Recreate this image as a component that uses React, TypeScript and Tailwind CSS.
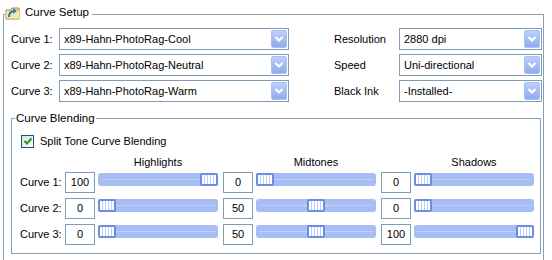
import React from 'react';

const ComboBox: React.FC<{ value: string; width: string }> = ({ value, width }) => (
  <div className={`${width} h-[22px] border border-[#7f9db9] bg-white flex items-center pl-[4px] pr-[1px]`}>
    <span className="flex-1 truncate">{value}</span>
    <div className="w-[16px] h-[18px] rounded-[2px] bg-gradient-to-b from-[#bcd0fa] to-[#8fabee] border border-[#a9c0f3] flex items-center justify-center">
      <svg width="10" height="8" viewBox="0 0 10 8">
        <path d="M1.5 2 L5 5.5 L8.5 2" fill="none" stroke="#ffffff" strokeWidth="2.2" />
      </svg>
    </div>
  </div>
);

const Slider: React.FC<{ value: number }> = ({ value }) => (
  <div className="relative ml-[3px] mt-[1px] w-[120px] h-[13px] rounded-[3px] bg-[#a6bdf5]">
    <div className="absolute left-[3px] right-[3px] top-[6px] h-[1px] bg-[#c0d0f8]" />
    <div
      className="absolute top-0 w-[18px] h-[13px] rounded-[2px] bg-[#6a8ee2] p-[2px]"
      style={{ left: `${(value / 100) * 102}px` }}
    >
      <div className="w-full h-full bg-white flex justify-evenly">
        <div className="w-[1px] h-full bg-[#bccdf6]" />
        <div className="w-[1px] h-full bg-[#bccdf6]" />
        <div className="w-[1px] h-full bg-[#bccdf6]" />
        <div className="w-[1px] h-full bg-[#bccdf6]" />
      </div>
    </div>
  </div>
);

const ValueBox: React.FC<{ value: number; first?: boolean }> = ({ value, first }) => (
  <div
    className={`${first ? '' : 'ml-[5px]'} w-[30px] h-[21px] border border-[#7f9db9] bg-white flex items-center justify-center`}
  >
    {value}
  </div>
);

const SetupIcon = () => (
  <svg width="16" height="16" viewBox="0 0 16 16">
    <path d="M1 5 H6 L7 3 H14 V14 H1 Z" fill="#f2dc8c" stroke="#a68c3c" strokeWidth="1" />
    <path d="M1.5 6 H14 V13.5 H1.5 Z" fill="#f8e8a8" />
    <path d="M4 12 C4 8 6 6 10 6" fill="none" stroke="#2f78d0" strokeWidth="2.2" />
    <path d="M8 3 L12 6 L8 9 Z" fill="#2f78d0" />
  </svg>
);

const rows = [
  { label: 'Curve 1:', values: [100, 0, 0] },
  { label: 'Curve 2:', values: [0, 50, 0] },
  { label: 'Curve 3:', values: [0, 50, 100] },
];

export default function App() {
  return (
    <div className="w-[552px] h-[260px] overflow-hidden bg-white pt-[14px] pl-[3px] font-['Liberation_Sans',Arial,sans-serif] text-[11px] text-black">
      <div className="relative w-[541px] h-[260px] border border-[#8a9fb2] pt-[13px] pl-[7px]">
        <div className="absolute left-[1px] top-[-11px] flex items-center gap-[4px] bg-white pr-[3px]">
          <SetupIcon />
          <span className="text-[11.5px]">Curve Setup</span>
        </div>

        <div className="flex">
          <div className="flex flex-col gap-[4px]">
            <div className="flex items-center">
              <span className="w-[48px]">Curve 1:</span>
              <ComboBox value="x89-Hahn-PhotoRag-Cool" width="w-[230px]" />
            </div>
            <div className="flex items-center">
              <span className="w-[48px]">Curve 2:</span>
              <ComboBox value="x89-Hahn-PhotoRag-Neutral" width="w-[230px]" />
            </div>
            <div className="flex items-center">
              <span className="w-[48px]">Curve 3:</span>
              <ComboBox value="x89-Hahn-PhotoRag-Warm" width="w-[230px]" />
            </div>
          </div>
          <div className="ml-[45px] flex flex-col gap-[4px]">
            <div className="flex items-center">
              <span className="w-[65px]">Resolution</span>
              <ComboBox value="2880 dpi" width="w-[143px]" />
            </div>
            <div className="flex items-center">
              <span className="w-[65px]">Speed</span>
              <ComboBox value="Uni-directional" width="w-[143px]" />
            </div>
            <div className="flex items-center">
              <span className="w-[65px]">Black Ink</span>
              <ComboBox value="-Installed-" width="w-[143px]" />
            </div>
          </div>
        </div>

        <div className="relative mt-[16px] w-[530px] h-[136px] border border-[#8a9fb2] pt-[14px] pl-[9px]">
          <div className="absolute left-[3px] top-[-8px] bg-white px-[1px] text-[11.5px] leading-[14px]">
            Curve Blending
          </div>

          <div className="flex items-center gap-[6px]">
            <div className="w-[13px] h-[13px] border border-[#1c5180] bg-gradient-to-br from-[#dcdcd7] to-white flex items-center justify-center">
              <svg width="10" height="10" viewBox="0 0 10 10">
                <path d="M1.5 5 L4 7.5 L8.5 2.5" fill="none" stroke="#21a121" strokeWidth="2.2" />
              </svg>
            </div>
            <span>Split Tone Curve Blending</span>
          </div>

          <div className="mt-[5px] ml-[-1px] flex h-[14px] leading-[14px]">
            <div className="w-[45px]" />
            <div className="w-[30px]" />
            <div className="ml-[3px] w-[120px] text-center">Highlights</div>
            <div className="ml-[5px] w-[30px]" />
            <div className="ml-[3px] w-[120px] text-center">Midtones</div>
            <div className="ml-[5px] w-[30px]" />
            <div className="ml-[3px] w-[120px] text-center">Shadows</div>
          </div>

          <div className="mt-[3px] ml-[-1px] flex flex-col gap-[5px]">
            {rows.map((row) => (
              <div key={row.label} className="flex items-start">
                <span className="w-[45px] leading-[21px]">{row.label}</span>
                <ValueBox value={row.values[0]} first />
                <Slider value={row.values[0]} />
                <ValueBox value={row.values[1]} />
                <Slider value={row.values[1]} />
                <ValueBox value={row.values[2]} />
                <Slider value={row.values[2]} />
              </div>
            ))}
          </div>
        </div>
      </div>
    </div>
  );
}
